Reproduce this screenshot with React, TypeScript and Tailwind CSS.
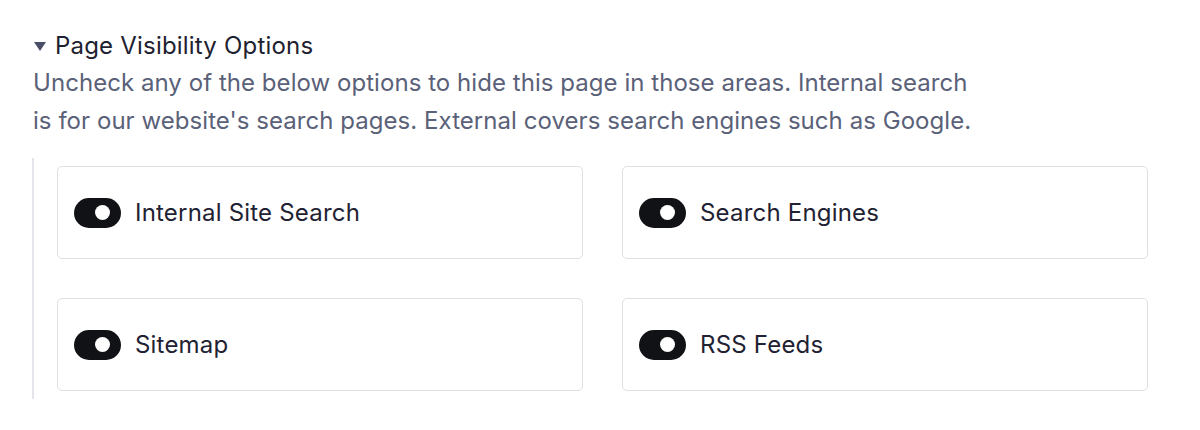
import React from "react";

const options = ["Internal Site Search", "Search Engines", "Sitemap", "RSS Feeds"];

function Toggle() {
  return (
    <span className="flex h-[30px] w-[47px] shrink-0 items-center justify-end rounded-full bg-[#111216] pr-[11px]">
      <span className="h-[15px] w-[15px] rounded-full bg-white" />
    </span>
  );
}

export default function App() {
  return (
    <div className="min-h-[430px] bg-white px-[33px] pt-[28px] font-['Inter',sans-serif]">
      {/* Heading */}
      <div className="flex items-center gap-[9px] pl-px">
        <svg width="12" height="9" viewBox="0 0 12 9" className="mt-[1px]">
          <polygon points="0,0 12,0 6,9" fill="#4a4f66" />
        </svg>
        <h3 className="text-[24px] leading-[36px] tracking-[0.2px] text-[#1e2130]">
          Page Visibility Options
        </h3>
      </div>

      <p className="w-[950px] text-[24px] leading-[38px] tracking-[0.05px] text-[#5a6178]">
        Uncheck any of the below options to hide this page in those areas. Internal search
        is for our website's search pages. External covers search engines such as Google.
      </p>

      {/* Options */}
      <div className="mt-[18px] ml-[-1px] w-[1116px] border-l-2 border-[#e4e5ea] py-2 pl-[23px]">
        <div className="grid grid-cols-2 gap-x-[39px] gap-y-[39px]">
          {options.map((label) => (
            <label
              key={label}
              className="flex h-[93px] items-center gap-[14px] rounded-[5px] border border-[#dfe0e6] px-[16px]"
            >
              <Toggle />
              <span className="text-[24px] tracking-[0.2px] text-[#1f2233]">{label}</span>
            </label>
          ))}
        </div>
      </div>
    </div>
  );
}
